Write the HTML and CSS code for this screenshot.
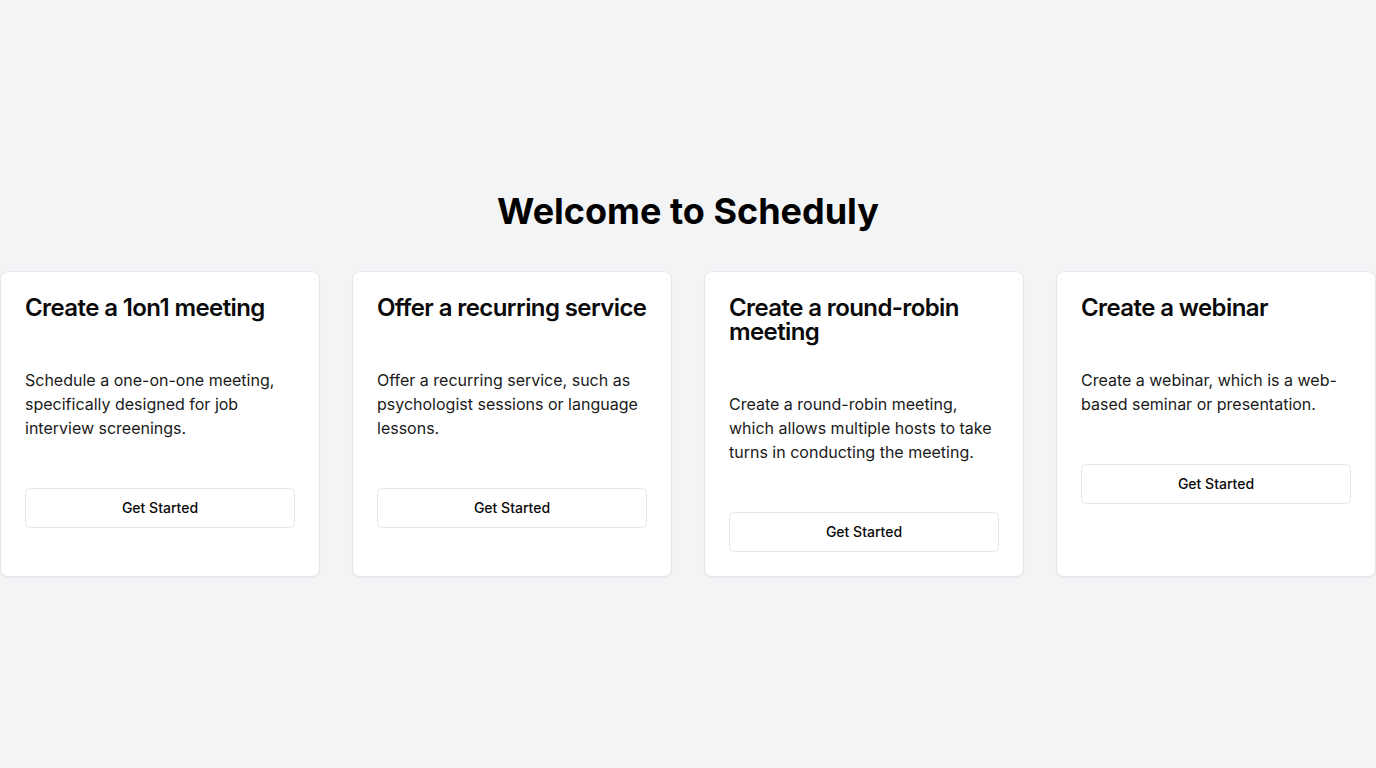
FILE: index.html
```html
<!DOCTYPE html>
<html lang="en">
<head>
<meta charset="utf-8">
<title>Scheduly</title>
<link rel="stylesheet" href="styles.css">
</head>
<body>
<main class="page">
  <h1 class="heading">Welcome to Scheduly</h1>
  <section class="cards">
    <article class="card">
      <h2 class="card-title">Create a 1on1 meeting</h2>
      <p class="card-desc">Schedule a one-on-one meeting, specifically designed for job interview screenings.</p>
      <button class="btn">Get Started</button>
    </article>
    <article class="card">
      <h2 class="card-title">Offer a recurring service</h2>
      <p class="card-desc">Offer a recurring service, such as psychologist sessions or language lessons.</p>
      <button class="btn">Get Started</button>
    </article>
    <article class="card">
      <h2 class="card-title">Create a round-robin meeting</h2>
      <p class="card-desc">Create a round-robin meeting, which allows multiple hosts to take turns in conducting the meeting.</p>
      <button class="btn">Get Started</button>
    </article>
    <article class="card">
      <h2 class="card-title">Create a webinar</h2>
      <p class="card-desc">Create a webinar, which is a web-based seminar or presentation.</p>
      <button class="btn">Get Started</button>
    </article>
  </section>
</main>
</body>
</html>
```
FILE: styles.css
```css
* { box-sizing: border-box; }
html, body { margin: 0; padding: 0; }
body {
  background: #f3f4f6;
  font-family: Inter, "Noto Sans", "Liberation Sans", sans-serif;
  color: #0a0a0a;
}
.page {
  min-height: 768px;
  display: flex;
  flex-direction: column;
  justify-content: center;
  align-items: stretch;
}
.heading {
  margin: 0 0 40px;
  text-align: center;
  font-size: 36px;
  line-height: 40px;
  font-weight: 700;
  letter-spacing: 0;
  color: #000;
}
.cards {
  display: grid;
  grid-template-columns: repeat(4, 320px);
  gap: 32px;
}
.card {
  background: #fff;
  border: 1px solid #e5e7eb;
  border-radius: 8px;
  box-shadow: 0 1px 2px rgba(0,0,0,0.05);
  padding: 24px;
  display: flex;
  flex-direction: column;
  align-items: stretch;
}
.card-title {
  margin: 0;
  font-size: 24px;
  line-height: 24px;
  font-weight: 600;
  letter-spacing: -0.6px;
  color: #0a0a0a;
}
.card-desc {
  margin: 48px 0 48px;
  font-size: 16px;
  line-height: 24px;
  color: #1a1a1a;
}
.btn {
  height: 40px;
  width: 100%;
  padding: 0 0 1px;
  background: #fff;
  border: 1px solid #e5e7eb;
  border-radius: 6px;
  font-family: inherit;
  font-size: 14px;
  font-weight: 500;
  color: #0a0a0a;
  cursor: pointer;
}
```
